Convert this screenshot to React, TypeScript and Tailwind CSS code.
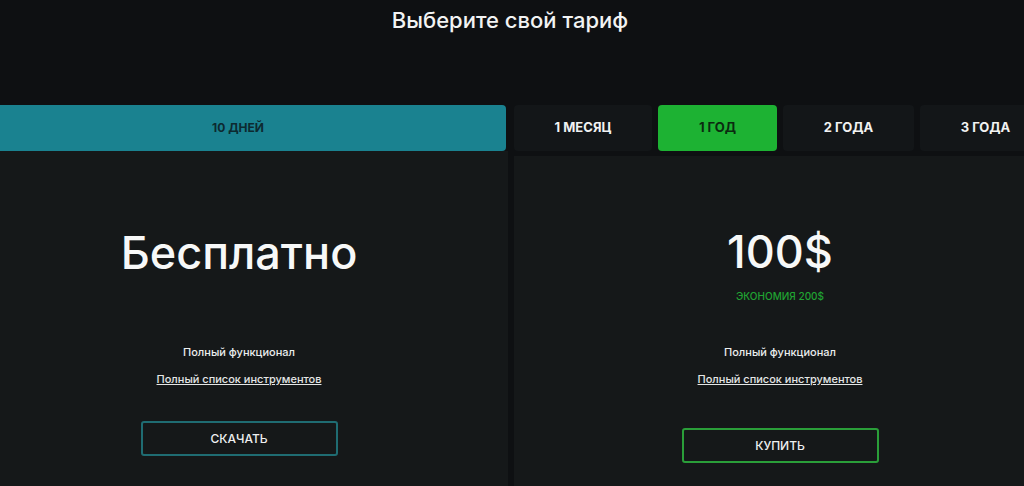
const font = { fontFamily: "Inter, 'Noto Sans', sans-serif" };

type Period = { label: string; width: string; active?: boolean };

const periods: Period[] = [
  { label: "1 месяц", width: "w-[138px]" },
  { label: "1 год", width: "w-[119px]", active: true },
  { label: "2 года", width: "w-[131px]" },
  { label: "3 года", width: "w-[131px]" }
];

export default function App() {
  return (
    <div className="h-[486px] w-[1024px] overflow-hidden bg-[#0e1012] text-white" style={font}>
      <h1 className="pt-[6px] pr-[4px] text-center text-[22px] leading-[28px] font-medium text-[#f2f3f3]">
        Выберите свой тариф
      </h1>

      <div className="mt-[71px] flex gap-[6px]">
        <div className="-ml-[30px] flex w-[538px] shrink-0 flex-col">
          <button
            className="h-[46px] w-[536px] rounded-r-[4px] bg-[#1a8290] text-[12px] font-bold uppercase text-[#0d2a30]"
            type="button"
          >
            10 дней
          </button>
          <div className="flex h-[340px] flex-col items-center bg-[#151819] pt-[76px]">
            <p className="text-[45px] leading-[52px] font-medium text-[#f7f8f8]">Бесплатно</p>
            <PlanDetails className="mt-[65px]" />
            <button
              className="mt-[34px] h-[35px] w-[197px] rounded-[3px] border-2 border-[#1f6c72] text-[12px] font-medium text-[#eef0f0]"
              type="button"
            >
              СКАЧАТЬ
            </button>
          </div>
        </div>

        <div className="flex shrink-0 flex-col">
          <div className="flex gap-[6px]">
            {periods.map((period) => (
              <button
                className={`h-[46px] ${period.width} rounded-[4px] text-[13px] font-bold uppercase ${
                  period.active ? "bg-[#1db233] text-[#0b2a10]" : "bg-[#131618] text-[#f1f2f2]"
                }`}
                key={period.label}
                type="button"
              >
                {period.label}
              </button>
            ))}
          </div>
          <div className="mt-[5px] flex h-[340px] w-[536px] flex-col items-center bg-[#151819] pt-[70px]">
            <p className="pr-[4px] text-[45px] leading-[52px] font-medium text-[#f7f8f8]">100$</p>
            <p className="mt-[11px] pr-[4px] text-[10px] leading-[14px] font-medium text-[#20a332]">
              ЭКОНОМИЯ 200$
            </p>
            <PlanDetails className="mt-[41px] pr-[4px]" />
            <button
              className="mt-[41px] mr-[4px] h-[35px] w-[197px] rounded-[3px] border-2 border-[#2a9e39] text-[12px] font-medium text-[#eef0f0]"
              type="button"
            >
              КУПИТЬ
            </button>
          </div>
        </div>
      </div>
    </div>
  );
}

function PlanDetails({ className }: { className: string }) {
  return (
    <div className={`flex flex-col items-center ${className}`}>
      <p className="text-[11px] leading-[16px] font-medium text-[#eceeee]">Полный функционал</p>
      <a className="mt-[11px] text-[11px] leading-[16px] font-medium text-[#e4e6e6] underline" href="#">
        Полный список инструментов
      </a>
    </div>
  );
}
